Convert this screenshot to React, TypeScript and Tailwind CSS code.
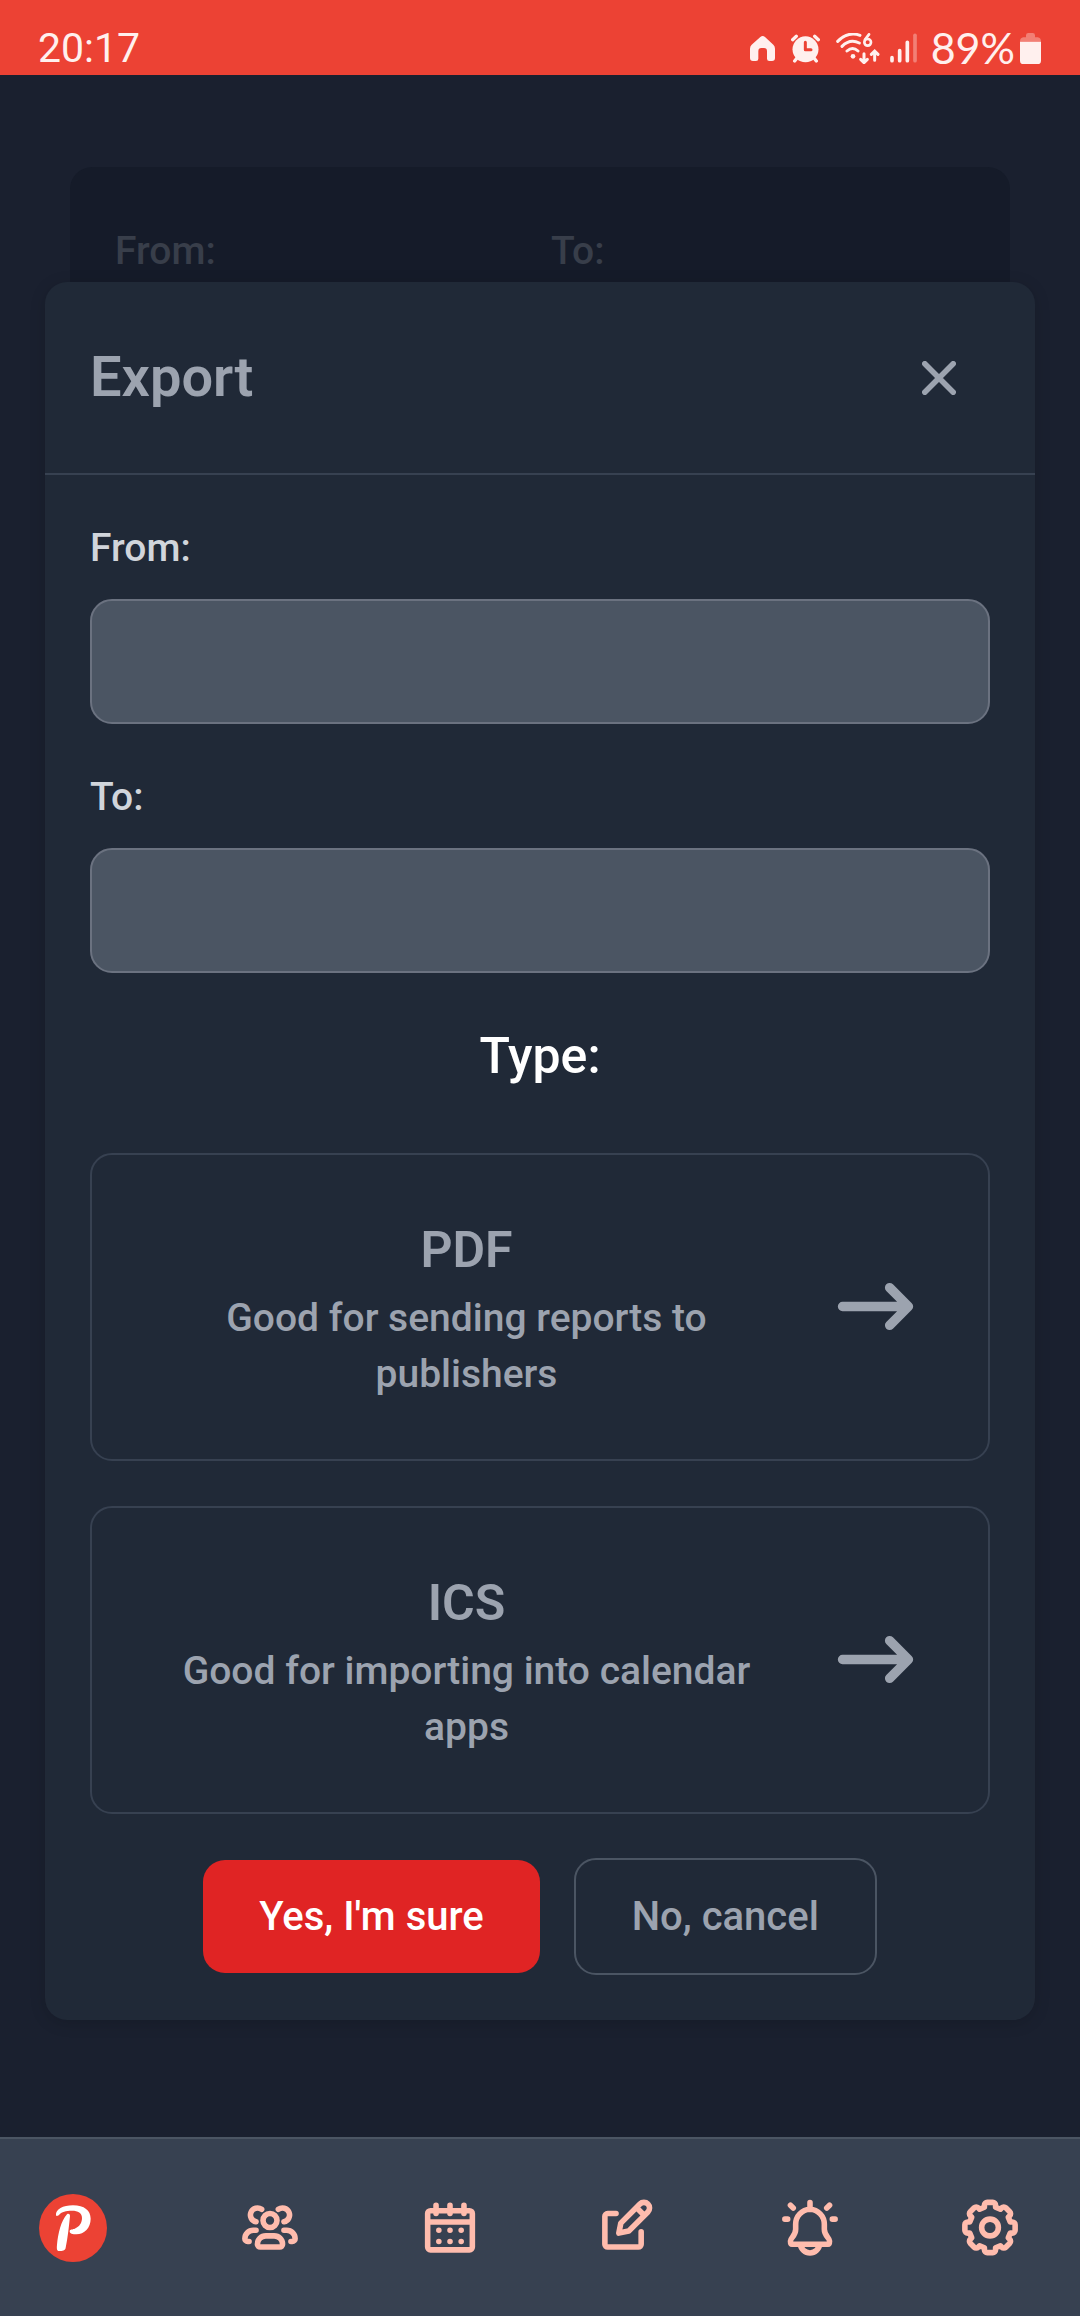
import React, { useState } from "react";

const USERS =
  "M4.5 17H4a1 1 0 0 1-1-1 3 3 0 0 1 3-3h1m0-3.05A2.5 2.5 0 1 1 9 5.5M19.5 17h.5a1 1 0 0 0 1-1 3 3 0 0 0-3-3h-1m0-3.05a2.5 2.5 0 1 0-2-4.45m.5 13.5h-7a1 1 0 0 1-1-1 3 3 0 0 1 3-3h3a3 3 0 0 1 3 3 1 1 0 0 1-1 1Zm-1-9.5a2.5 2.5 0 1 1-5 0 2.5 2.5 0 0 1 5 0Z";
const CALENDAR =
  "M4 10h16m-8-3V4M7 7V4m10 3V4M5 20h14a1 1 0 0 0 1-1V7a1 1 0 0 0-1-1H5a1 1 0 0 0-1 1v12a1 1 0 0 0 1 1Zm3-7h.01v.01H8V13Zm4 0h.01v.01H12V13Zm4 0h.01v.01H16V13Zm-8 4h.01v.01H8V17Zm4 0h.01v.01H12V17Zm4 0h.01v.01H16V17Z";
const EDIT =
  "m14.304 4.844 2.852 2.852M7 7H4a1 1 0 0 0-1 1v10a1 1 0 0 0 1 1h11a1 1 0 0 0 1-1v-4.5m2.409-9.91a2.017 2.017 0 0 1 0 2.853l-6.844 6.844L8 14l.713-3.565 6.844-6.844a2.015 2.015 0 0 1 2.852 0Z";
const BELL =
  "M12 5.464V3.099m0 2.365a5.338 5.338 0 0 1 5.133 5.368v1.8c0 2.386 1.867 2.982 1.867 4.175C19 17.4 19 18 18.462 18H5.538C5 18 5 17.4 5 16.807c0-1.193 1.867-1.789 1.867-4.175v-1.8A5.338 5.338 0 0 1 12 5.464ZM6 5 5 4M4 9H3m15-4 1-1m1 5h1M8.54 18a3.48 3.48 0 0 0 6.92 0H8.54Z";
const COG =
  "M21 13v-2a1 1 0 0 0-1-1h-.757l-.707-1.707.535-.536a1 1 0 0 0 0-1.414l-1.414-1.414a1 1 0 0 0-1.414 0l-.536.535L14 4.757V4a1 1 0 0 0-1-1h-2a1 1 0 0 0-1 1v.757l-1.707.707-.536-.535a1 1 0 0 0-1.414 0L4.929 6.343a1 1 0 0 0 0 1.414l.536.536L4.757 10H4a1 1 0 0 0-1 1v2a1 1 0 0 0 1 1h.757l.707 1.707-.535.536a1 1 0 0 0 0 1.414l1.414 1.414a1 1 0 0 0 1.414 0l.536-.535 1.707.707V20a1 1 0 0 0 1 1h2a1 1 0 0 0 1-1v-.757l1.707-.708.536.536a1 1 0 0 0 1.414 0l1.414-1.414a1 1 0 0 0 0-1.414l-.535-.536.707-1.707H20a1 1 0 0 0 1-1ZM12 15a3 3 0 1 0 0-6 3 3 0 0 0 0 6Z";

function LineIcon({ d, className }: { d: string; className: string }) {
  return (
    <svg
      aria-hidden="true"
      viewBox="0 0 24 24"
      fill="none"
      stroke="currentColor"
      strokeWidth={2}
      strokeLinecap="round"
      strokeLinejoin="round"
      className={className}
    >
      <path d={d} />
    </svg>
  );
}

function StatusBar() {
  return (
    <header className="flex h-[75px] items-center justify-between bg-[#ec4234] pt-[21px] pr-[39px] pl-[38px] text-[#fff0ee]">
      <time className="text-[41px] leading-none">20:17</time>
      <div className="flex items-center">
        <svg aria-label="Home" role="img" viewBox="0 0 75 75" className="h-[25px] w-[25px]" fill="currentColor">
          <path d="M5 26 31 3Q38-3 45 3L70 26Q75 31 75 38V66Q75 75 66 75H58Q51 75 51 68V46Q51 36 42 36H34Q25 36 25 46V68Q25 75 18 75H9Q0 75 0 66V38Q0 31 5 26Z" />
        </svg>
        <svg aria-label="Alarm" role="img" viewBox="0 0 87 87" className="ml-4 h-[29px] w-[29px]">
          <g stroke="currentColor" strokeWidth={10} strokeLinecap="round">
            <path d="M5 17 16 7M82 17 71 7M18 72 11 81M69 72 76 81" />
          </g>
          <circle cx="43.5" cy="46" r="39" fill="currentColor" />
          <path d="M43 25V47H60" fill="none" stroke="#ec4234" strokeWidth={9} strokeLinejoin="round" strokeLinecap="round" />
        </svg>
        <svg aria-label="Wi-Fi 6" role="img" viewBox="0 0 132 93" className="ml-4 h-[31px] w-[44px]" fill="none" stroke="currentColor" strokeWidth={9} strokeLinecap="round">
          <path d="M5 25Q36-6 72 7M18 40Q42 16 70 30M33 54Q50 39 66 54" />
          <circle cx="51" cy="70" r="7" fill="currentColor" stroke="none" />
          <path d="M84 62V88M74 79 84 89 94 79M116 82V55M106 64 116 54 126 64" />
          <path d="M99 4 87 20" strokeWidth={8} />
          <circle cx="95" cy="28" r="10" strokeWidth={8} />
        </svg>
        <svg aria-label="Signal" role="img" viewBox="0 0 81 90" className="ml-[10px] h-[30px] w-[27px]" stroke="currentColor" strokeWidth={11} strokeLinecap="round">
          <path d="M6 74V83M29 53V83M52 28V83" />
          <path d="M75 7V83" opacity={0.35} />
        </svg>
        <span className="ml-[14px] pb-[2px] font-['Lato',sans-serif] text-[43px] leading-none">89%</span>
        <svg aria-label="Battery" role="img" viewBox="0 0 63 93" className="ml-[5px] h-[31px] w-[21px]" fill="currentColor">
          <path d="M0 26Q0 14 10 13H18V7Q18 0 25 0H38Q45 0 45 7V13H53Q63 14 63 26Z" opacity={0.35} />
          <path d="M0 26H63V83Q63 93 53 93H10Q0 93 0 83Z" />
        </svg>
      </div>
    </header>
  );
}

function Field({ id, label }: { id: string; label: string }) {
  const [value, setValue] = useState("");
  return (
    <div>
      <label htmlFor={id} className="mb-[23px] block text-[39px] leading-[56px] font-medium text-[#d1d5db]">
        {label}
      </label>
      <input
        id={id}
        type="text"
        value={value}
        onChange={(e) => setValue(e.target.value)}
        className="block h-[125px] w-full rounded-[22px] border-2 border-[#6b7280] bg-[#4b5563] px-7 text-[39px] text-white"
      />
    </div>
  );
}

function TypeOption({ title, text }: { title: string; text: string }) {
  return (
    <button
      type="button"
      className="flex w-full items-center gap-[34px] rounded-[22px] border-2 border-[#374151] px-14 pt-14 pb-[57px] text-center text-[#9ca3af]"
    >
      <span className="flex-1">
        <span className="block text-[50px] leading-[79px] font-semibold">{title}</span>
        <span className="block text-[39px] leading-[56px] font-medium">{text}</span>
      </span>
      <LineIcon d="M19 12H5m14 0-4 4m4-4-4-4" className="h-[113px] w-[113px] shrink-0" />
    </button>
  );
}

function ExportDialog() {
  return (
    <section
      role="dialog"
      aria-labelledby="export-title"
      className="z-10 col-start-1 row-start-1 mx-[45px] mt-[207px] mb-[117px] self-start rounded-[22px] bg-[#202937] shadow-[0_3px_16px_rgba(0,0,0,0.15)]"
    >
      <div className="flex items-center justify-between border-b-2 border-[#374151] p-[45px]">
        <h2 id="export-title" className="text-[56px] leading-[79px] font-semibold text-[#9ca3af]">
          Export
        </h2>
        <button type="button" aria-label="Close" className="flex h-[101px] w-[102px] items-center justify-center text-[#9ca3af]">
          <svg
            aria-hidden="true"
            viewBox="0 0 14 14"
            fill="none"
            stroke="currentColor"
            strokeWidth={2.3}
            strokeLinecap="round"
            className="h-[34px] w-[34px]"
          >
            <path d="m1.15 1.15 11.7 11.7M12.85 1.15l-11.7 11.7" />
          </svg>
        </button>
      </div>
      <form className="p-[45px]" onSubmit={(e) => e.preventDefault()}>
        <div className="flex flex-col gap-[45px]">
          <Field id="export-from" label="From:" />
          <Field id="export-to" label="To:" />
        </div>
        <h3 className="mt-11 mb-[57px] text-center text-[50px] leading-[79px] font-medium text-white">Type:</h3>
        <div className="flex flex-col gap-[45px]">
          <TypeOption title="PDF" text="Good for sending reports to publishers" />
          <TypeOption title="ICS" text="Good for importing into calendar apps" />
        </div>
        <div className="mt-11 flex items-center justify-center gap-[34px]">
          <button
            type="submit"
            className="rounded-[22px] bg-[#e02424] px-14 py-7 text-[40px] leading-[57px] font-medium text-white"
          >
            Yes, I'm sure
          </button>
          <button
            type="button"
            className="rounded-[22px] border-2 border-[#4b5563] px-14 py-7 text-[40px] leading-[57px] font-medium text-[#9ca3af]"
          >
            No, cancel
          </button>
        </div>
      </form>
    </section>
  );
}

function DimmedCard() {
  return (
    <div
      aria-hidden="true"
      className="col-start-1 row-start-1 mx-[70px] mt-[92px] grid h-[400px] grid-cols-2 gap-[22px] self-start rounded-[22px] bg-[#151b29] px-[45px] pt-14 text-[39px] leading-[56px] font-medium text-[#383e4a]"
    >
      <span>From:</span>
      <span>To:</span>
    </div>
  );
}

function Logo() {
  return (
    <svg aria-hidden="true" viewBox="0 0 204 204" className="h-[68px] w-[68px]">
      <circle cx="102" cy="102" r="102" fill="#ec4234" />
      <g fill="#fff">
        <path d="M84 61C88 58 93 60 93 66C90 98 86 132 80 161C79 169 70 171 60 171C53 171 53 162 54 152C57 120 66 80 84 61Z" />
        <path d="M51 64C49 46 72 34 102 34C136 34 155 50 155 74C155 102 136 120 112 121C102 121 91 119 92 111C93 104 101 108 107 104C122 98 129 86 129 72C129 57 117 50 99 50C80 50 68 54 62 61C58 66 52 68 51 64Z" />
      </g>
    </svg>
  );
}

const NAV = [
  { label: "Groups", d: USERS },
  { label: "Calendar", d: CALENDAR },
  { label: "Edit", d: EDIT },
  { label: "Notifications", d: BELL },
  { label: "Settings", d: COG },
];

function BottomNav() {
  return (
    <nav className="grid h-[179px] grid-cols-6 border-t-2 border-[#4b5563] bg-[#374151] text-[#ffbcad]">
      <a href="#home" aria-label="Home" className="flex items-center pl-[39px]">
        <Logo />
      </a>
      {NAV.map((item) => (
        <a key={item.label} href="#" aria-label={item.label} className="flex items-center justify-center">
          <LineIcon d={item.d} className="h-[67px] w-[68px]" />
        </a>
      ))}
    </nav>
  );
}

export default function App() {
  return (
    <div className="flex min-h-screen flex-col bg-[#1a202f] font-['Roboto',sans-serif]">
      <StatusBar />
      <main className="grid flex-1 grid-cols-1">
        <DimmedCard />
        <ExportDialog />
      </main>
      <BottomNav />
    </div>
  );
}
